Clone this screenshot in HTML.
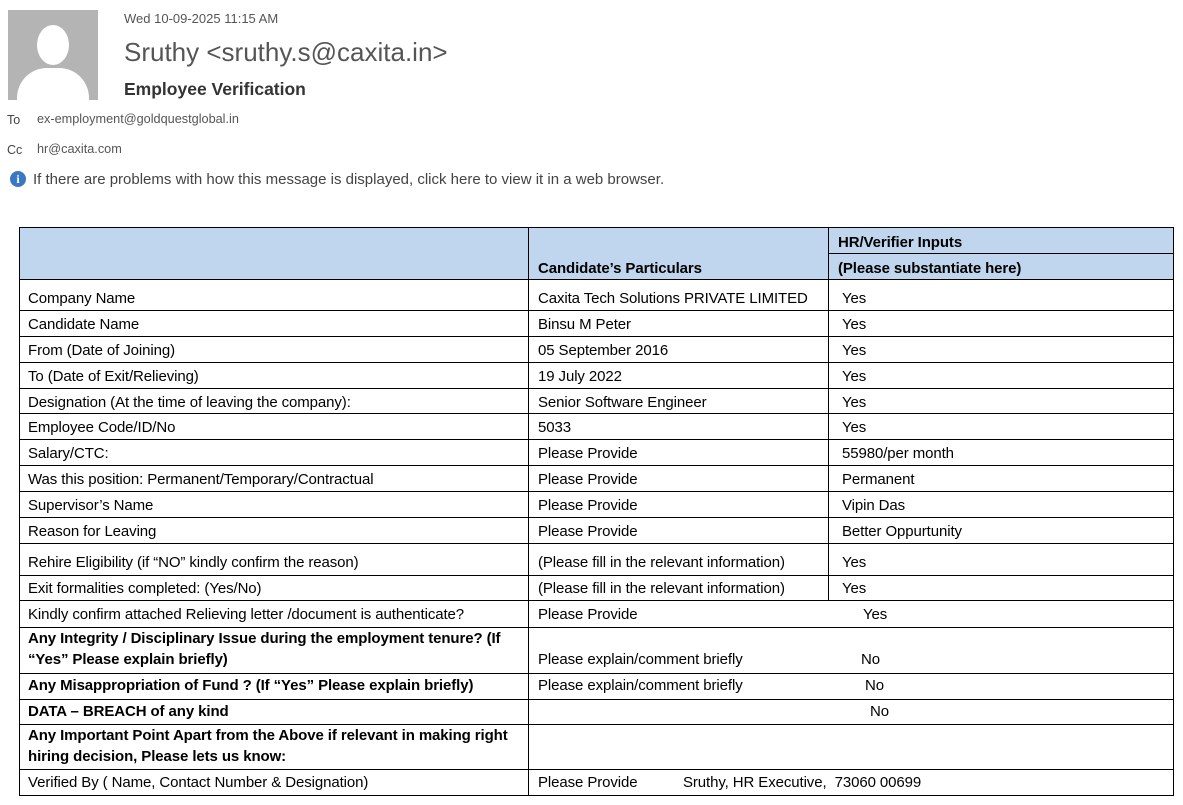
<!DOCTYPE html>
<html><head><meta charset="utf-8"><style>
body{margin:0;width:1183px;height:805px;background:#fff;position:relative;overflow:hidden;font-family:"Liberation Sans",sans-serif;}
.a{position:absolute;white-space:nowrap;}
.t{position:absolute;white-space:nowrap;font-size:15px;line-height:18px;color:#000;letter-spacing:-0.1px;margin-top:1px}
.b{font-weight:bold;letter-spacing:-0.1px;font-size:15px}
.h{position:absolute;height:1px;background:#000}
.v{position:absolute;width:1px;background:#000}
</style></head><body>
<div class="a" style="left:8px;top:10px;width:90px;height:90px;background:#b4b4b4;overflow:hidden">
<div style="position:absolute;left:29px;top:15px;width:32px;height:40px;border-radius:50%;background:#fff"></div>
<div style="position:absolute;left:9px;top:58px;width:72px;height:50px;border-radius:30px 30px 0 0;background:#fff"></div>
</div>
<div class="a" style="left:124px;top:11px;font-size:13px;color:#555">Wed 10-09-2025 11:15 AM</div>
<div class="a" style="left:124px;top:37px;font-size:26px;color:#555">Sruthy &lt;sruthy.s@caxita.in&gt;</div>
<div class="a" style="left:124px;top:79px;font-size:17.5px;font-weight:bold;color:#333">Employee Verification</div>
<div class="a" style="left:7px;top:113px;font-size:12.5px;color:#444">To</div>
<div class="a" style="left:37px;top:112px;font-size:12.7px;color:#555">ex-employment@goldquestglobal.in</div>
<div class="a" style="left:7px;top:143px;font-size:12.5px;color:#444">Cc</div>
<div class="a" style="left:37px;top:142px;font-size:12.7px;color:#555">hr@caxita.com</div>
<div class="a" style="left:10px;top:171px;width:16px;height:16px;border-radius:50%;background:#3b78c3;color:#fff;font-size:12px;font-weight:bold;text-align:center;line-height:16px;font-family:'Liberation Serif',serif">i</div>
<div class="a" style="left:33px;top:171px;font-size:15px;color:#444">If there are problems with how this message is displayed, click here to view it in a web browser.</div>

<div class="a" style="left:19px;top:228px;width:1154px;height:51px;background:#c0d6ee"></div>
<div class="h" style="left:19px;top:227px;width:1155px"></div>
<div class="h" style="left:828px;top:253px;width:346px"></div>
<div class="h" style="left:19px;top:279px;width:1155px"></div>
<div class="h" style="left:19px;top:310px;width:1155px"></div>
<div class="h" style="left:19px;top:336px;width:1155px"></div>
<div class="h" style="left:19px;top:362px;width:1155px"></div>
<div class="h" style="left:19px;top:388px;width:1155px"></div>
<div class="h" style="left:19px;top:413px;width:1155px"></div>
<div class="h" style="left:19px;top:439px;width:1155px"></div>
<div class="h" style="left:19px;top:465px;width:1155px"></div>
<div class="h" style="left:19px;top:491px;width:1155px"></div>
<div class="h" style="left:19px;top:517px;width:1155px"></div>
<div class="h" style="left:19px;top:543px;width:1155px"></div>
<div class="h" style="left:19px;top:575px;width:1155px"></div>
<div class="h" style="left:19px;top:600px;width:1155px"></div>
<div class="h" style="left:19px;top:627px;width:1155px"></div>
<div class="h" style="left:19px;top:673px;width:1155px"></div>
<div class="h" style="left:19px;top:699px;width:1155px"></div>
<div class="h" style="left:19px;top:724px;width:1155px"></div>
<div class="h" style="left:19px;top:769px;width:1155px"></div>
<div class="h" style="left:19px;top:795px;width:1155px"></div>
<div class="v" style="left:19px;top:227px;height:569px"></div>
<div class="v" style="left:528px;top:227px;height:569px"></div>
<div class="v" style="left:828px;top:227px;height:374px"></div>
<div class="v" style="left:1173px;top:227px;height:569px"></div>

<div class="t b" style="left:538px;top:259px">Candidate’s Particulars</div>
<div class="t b" style="left:838px;top:233px">HR/Verifier Inputs</div>
<div class="t b" style="left:838px;top:259px">(Please substantiate here)</div>

<div class="t" style="left:28px;top:289px">Company Name</div>
<div class="t" style="left:538px;top:289px">Caxita Tech Solutions PRIVATE LIMITED</div>
<div class="t" style="left:842px;top:289px">Yes</div>
<div class="t" style="left:28px;top:315px">Candidate Name</div>
<div class="t" style="left:538px;top:315px">Binsu M Peter</div>
<div class="t" style="left:842px;top:315px">Yes</div>
<div class="t" style="left:28px;top:341px">From (Date of Joining)</div>
<div class="t" style="left:538px;top:341px">05 September 2016</div>
<div class="t" style="left:842px;top:341px">Yes</div>
<div class="t" style="left:28px;top:367px">To (Date of Exit/Relieving)</div>
<div class="t" style="left:538px;top:367px">19 July 2022</div>
<div class="t" style="left:842px;top:367px">Yes</div>
<div class="t" style="left:28px;top:393px">Designation (At the time of leaving the company):</div>
<div class="t" style="left:538px;top:393px">Senior Software Engineer</div>
<div class="t" style="left:842px;top:393px">Yes</div>
<div class="t" style="left:28px;top:418px">Employee Code/ID/No</div>
<div class="t" style="left:538px;top:418px">5033</div>
<div class="t" style="left:842px;top:418px">Yes</div>
<div class="t" style="left:28px;top:444px">Salary/CTC:</div>
<div class="t" style="left:538px;top:444px">Please Provide</div>
<div class="t" style="left:842px;top:444px">55980/per month</div>
<div class="t" style="left:28px;top:470px">Was this position: Permanent/Temporary/Contractual</div>
<div class="t" style="left:538px;top:470px">Please Provide</div>
<div class="t" style="left:842px;top:470px">Permanent</div>
<div class="t" style="left:28px;top:496px">Supervisor’s Name</div>
<div class="t" style="left:538px;top:496px">Please Provide</div>
<div class="t" style="left:842px;top:496px">Vipin Das</div>
<div class="t" style="left:28px;top:522px">Reason for Leaving</div>
<div class="t" style="left:538px;top:522px">Please Provide</div>
<div class="t" style="left:842px;top:522px">Better Oppurtunity</div>
<div class="t" style="left:28px;top:553px">Rehire Eligibility (if “NO” kindly confirm the reason)</div>
<div class="t" style="left:538px;top:553px">(Please fill in the relevant information)</div>
<div class="t" style="left:842px;top:553px">Yes</div>
<div class="t" style="left:28px;top:579px">Exit formalities completed: (Yes/No)</div>
<div class="t" style="left:538px;top:579px">(Please fill in the relevant information)</div>
<div class="t" style="left:842px;top:579px">Yes</div>
<div class="t" style="left:28px;top:605px">Kindly confirm attached Relieving letter /document is authenticate?</div>
<div class="t" style="left:538px;top:605px">Please Provide</div>
<div class="t" style="left:863px;top:605px">Yes</div>
<div class="t b" style="left:28px;top:629px">Any Integrity / Disciplinary Issue during the employment tenure? (If</div>
<div class="t b" style="left:28px;top:650px">“Yes” Please explain briefly)</div>
<div class="t" style="left:538px;top:650px">Please explain/comment briefly</div>
<div class="t" style="left:861px;top:650px">No</div>
<div class="t b" style="left:28px;top:676px">Any Misappropriation of Fund ? (If “Yes” Please explain briefly)</div>
<div class="t" style="left:538px;top:676px">Please explain/comment briefly</div>
<div class="t" style="left:865px;top:676px">No</div>
<div class="t b" style="left:28px;top:702px">DATA – BREACH of any kind</div>
<div class="t" style="left:870px;top:702px">No</div>
<div class="t b" style="left:28px;top:726px">Any Important Point Apart from the Above if relevant in making right</div>
<div class="t b" style="left:28px;top:747px">hiring decision, Please lets us know:</div>
<div class="t" style="left:28px;top:773px">Verified By ( Name, Contact Number &amp; Designation)</div>
<div class="t" style="left:538px;top:773px">Please Provide</div>
<div class="t" style="left:683px;top:773px">Sruthy, HR Executive,&nbsp; 73060 00699</div>
</body></html>
